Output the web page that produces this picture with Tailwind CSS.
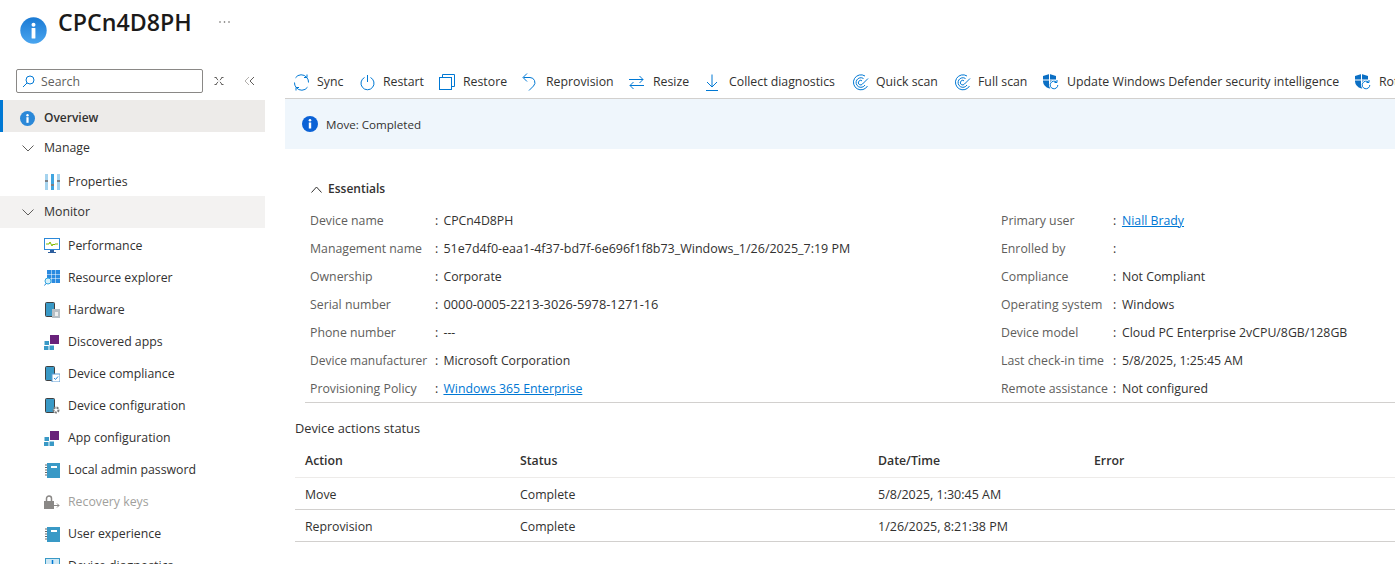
<!DOCTYPE html>
<html lang="en">
<head>
  <meta charset="UTF-8" />
  <title>CPCn4D8PH - Overview</title>
  <script src="https://cdn.jsdelivr.net/npm/@tailwindcss/browser@4"></script>
</head>
<body class="bg-white font-['Open_Sans',sans-serif] text-[12.3px] text-[#323130] h-[564px] w-[1395px] overflow-hidden">

  <!-- Title bar -->
  <header class="h-[60px] flex items-start">
    <svg class="ml-[20px] mt-[17px]" width="27" height="27" viewBox="0 0 27 27"><defs><linearGradient id="ig" x1="0" y1="0" x2="0" y2="1"><stop offset="0" stop-color="#1a7ad4"/><stop offset="1" stop-color="#4aa5ef"/></linearGradient></defs><circle cx="13.5" cy="13.5" r="13.2" fill="url(#ig)"/><circle cx="13.5" cy="7.8" r="2" fill="#fff"/><rect x="11.6" y="11" width="3.8" height="10.5" rx="0.6" fill="#fff"/></svg>
    <h1 class="ml-[11px] mt-[8px] text-[23.2px] leading-[28px] font-semibold text-[#1b1a19]">CPCn4D8PH</h1>
    <svg class="ml-[27px] mt-[21px]" width="11" height="2" viewBox="0 0 11 2" fill="#605e5c"><circle cx="1" cy="1" r=".8"/><circle cx="5.500" cy="1" r=".8"/><circle cx="10" cy="1" r=".8"/></svg>
  </header>

  <div class="flex">
    <!-- Left nav -->
    <aside class="w-[285px] shrink-0 h-[504px] overflow-hidden pr-[20px]">
      <div class="h-[40px] flex items-start pt-[9px]">
        <div class="ml-[16px] w-[187px] h-[24px] border border-[#8a8886] rounded-[2px] flex items-center">
          <svg class="ml-[5px]" width="13" height="13" viewBox="0 0 13 13" fill="none" stroke="#0078d4" stroke-width="1"><circle cx="8" cy="5" r="4"/><path d="M5 8 1 12"/></svg>
          <span class="ml-[6px] pt-[2px] text-[#605e5c]">Search</span>
        </div>
        <svg class="ml-[11px] mt-[7px]" width="10" height="10" viewBox="0 0 10 10" fill="none" stroke="#605e5c" stroke-width="1"><path d="M1.5 1 4 4.200M8.500 1 6 4.200M1.500 9 4 5.800M8.500 9 6 5.800M.5 1.500h2M7.500 1.500h2M.5 8.500h2M7.500 8.500h2"/></svg>
        <svg class="ml-[20px] mt-[7px]" width="11" height="10" viewBox="0 0 11 10" fill="none" stroke-width="1"><path d="M5 1 1 5l4 4" stroke="#b3b0ad"/><path d="M10 1 6 5l4 4" stroke="#605e5c"/></svg>
      </div>

      <nav>
        <a class="h-[32px] pt-[4px] flex items-center bg-[#edebe9] border-l-[3px] border-[#0078d4] font-semibold">
          <svg class="ml-[17px]" width="15" height="15" viewBox="0 0 15 15"><circle cx="7.5" cy="7.5" r="7.5" fill="#2b88d8"/><circle cx="7.5" cy="4.2" r="1.2" fill="#fff"/><rect x="6.4" y="6.2" width="2.2" height="5.6" fill="#fff"/></svg>
          <span class="ml-[9px] text-[12px]">Overview</span>
        </a>
        <a class="h-[32px] flex items-center">
          <svg class="ml-[22px]" width="12" height="7" viewBox="0 0 12 7" fill="none" stroke="#605e5c" stroke-width="1"><path d="M.5.5 6 6 11.5.5"/></svg>
          <span class="ml-[10px]">Manage</span>
        </a>
        <a class="h-[32px] pt-[4px] flex items-center">
          <svg class="ml-[45px]" width="15" height="16" viewBox="0 0 15 16"><path d="M0 0h3v16H0zM12 0h3v16h-3z" fill="#a5d3ee"/><path d="M6 0h3v16H6z" fill="#3fa5e0"/><path d="M0 6h3v2H0zM6 10h3v2H6zM12 6h3v2h-3z" fill="#7a7f85"/></svg>
          <span class="ml-[8px]">Properties</span>
        </a>
        <a class="h-[32px] flex items-center bg-[#f3f2f1]">
          <svg class="ml-[22px]" width="12" height="7" viewBox="0 0 12 7" fill="none" stroke="#605e5c" stroke-width="1"><path d="M.5.5 6 6 11.500.5"/></svg>
          <span class="ml-[10px]">Monitor</span>
        </a>
        <a class="h-[32px] pt-[4px] flex items-center">
          <svg class="ml-[44px]" width="16" height="16" viewBox="0 0 16 16"><rect x=".5" y=".5" width="15" height="11" fill="#fff" stroke="#2b88d8"/><path d="M2 6h3l1-2 2 4 1-2 1 1 1-1h3" fill="none" stroke="#7fba00"/><path d="M6 12h4v2h2v1H4v-1h2z" fill="#2d5f9e"/></svg>
          <span class="ml-[8px]">Performance</span>
        </a>
        <a class="h-[32px] pt-[4px] flex items-center">
          <svg class="ml-[44px]" width="16" height="16" viewBox="0 0 16 16"><path d="M3 0h4v4H3zM7.500 0h4v4h-4zM12 0h4v4h-4zM3 4.500h4v4H3zM7.500 4.500h4v4h-4zM12 4.500h4v4h-4zM7.500 9h4v4h-4zM12 9h4v4h-4z" fill="#2a8ae0"/><circle cx="4" cy="11" r="3" fill="#d5f0fb" stroke="#32a6de"/><path d="M2 13.500.5 15.500" stroke="#1a7fd9"/></svg>
          <span class="ml-[8px]">Resource explorer</span>
        </a>
        <a class="h-[32px] pt-[4px] flex items-center">
          <svg class="ml-[45px]" width="15" height="16" viewBox="0 0 15 16"><rect x=".5" y=".5" width="9" height="14" rx="1" fill="#3999c6" stroke="#404040"/><rect x="7" y="7" width="8" height="9" fill="#b8bfc4"/><rect x="10" y="10" width="3" height="4" fill="#eee"/></svg>
          <span class="ml-[8px]">Hardware</span>
        </a>
        <a class="h-[32px] pt-[4px] flex items-center">
          <svg class="ml-[44px]" width="15" height="15" viewBox="0 0 15 15"><rect x="6" y="0" width="9" height="9" fill="#68217a"/><path d="M.5 6H5v4H.500zM0 11h4.500v4H0zM5.500 10.500H10V15H5.500z" fill="#3999c6"/></svg>
          <span class="ml-[9px]">Discovered apps</span>
        </a>
        <a class="h-[32px] pt-[4px] flex items-center">
          <svg class="ml-[45px]" width="15" height="16" viewBox="0 0 15 16"><rect x=".5" y=".5" width="9" height="14" rx="1" fill="#3999c6" stroke="#404040"/><rect x="7" y="8" width="8" height="8" fill="#fff" stroke="#5a9bd5"/><path d="m9 12 1.500 1.500L13 10.500" fill="none" stroke="#2b88d8"/></svg>
          <span class="ml-[8px]">Device compliance</span>
        </a>
        <a class="h-[32px] pt-[4px] flex items-center">
          <svg class="ml-[45px]" width="15" height="16" viewBox="0 0 15 16"><rect x=".5" y=".5" width="9" height="14" rx="1" fill="#3999c6" stroke="#404040"/><circle cx="11" cy="12" r="2.500" fill="#fff" stroke="#7a7a7a" stroke-width="2" stroke-dasharray="2 1"/></svg>
          <span class="ml-[8px]">Device configuration</span>
        </a>
        <a class="h-[32px] pt-[4px] flex items-center">
          <svg class="ml-[44px]" width="15" height="15" viewBox="0 0 15 15"><rect x="6" y="0" width="9" height="9" fill="#68217a"/><path d="M.5 6H5v4H.500zM0 11h4.500v4H0zM5.500 10.500H10V15H5.500z" fill="#3999c6"/></svg>
          <span class="ml-[9px]">App configuration</span>
        </a>
        <a class="h-[32px] pt-[4px] flex items-center">
          <svg class="ml-[45px]" width="15" height="15" viewBox="0 0 15 15"><rect x="2" y="0" width="13" height="15" fill="#3999c6"/><path d="M0 2h2M0 4.500h2M0 7h2M0 9.500h2M0 12h2" stroke="#404040" stroke-width=".8"/><rect x="6" y="3" width="6" height="2" fill="#fff"/></svg>
          <span class="ml-[8px]">Local admin password</span>
        </a>
        <a class="h-[32px] pt-[4px] flex items-center text-[#a19f9d]">
          <svg class="ml-[44px]" width="16" height="14" viewBox="0 0 16 14"><rect x="0" y="6" width="10" height="8" fill="#8a8886"/><path d="M2.500 6V3.500a2.500 2.500 0 0 1 5 0V6" fill="none" stroke="#8a8886" stroke-width="1.500"/><path d="M10 10.500h5m-2-2 2 2-2 2" fill="none" stroke="#8a8886"/></svg>
          <span class="ml-[8px]">Recovery keys</span>
        </a>
        <a class="h-[32px] pt-[4px] flex items-center">
          <svg class="ml-[45px]" width="15" height="15" viewBox="0 0 15 15"><rect x="2" y="0" width="13" height="15" fill="#3999c6"/><path d="M0 2h2M0 4.500h2M0 7h2M0 9.500h2M0 12h2" stroke="#404040" stroke-width=".8"/><rect x="6" y="3" width="6" height="2" fill="#fff"/></svg>
          <span class="ml-[8px]">User experience</span>
        </a>
        <a class="h-[32px] pt-[4px] flex items-center">
          <svg class="ml-[45px]" width="15" height="16" viewBox="0 0 15 16"><rect x=".5" y=".5" width="14" height="13" fill="#cfe8f5" stroke="#3999c6"/><path d="M7.500 2v8M4.500 7l3 3 3-3" fill="none" stroke="#0078d4" stroke-width="1.500"/></svg>
          <span class="ml-[8px]">Device diagnostics</span>
        </a>
      </nav>
    </aside>

    <!-- Main -->
    <main class="flex-1 min-w-0">
      <!-- Command bar -->
      <div class="h-[39px] border-b border-[#d2d0ce] flex items-start pt-[11px] pl-[8px] whitespace-nowrap overflow-hidden">
        <button class="w-[66px] shrink-0 flex items-center h-[22px]">
          <span class="w-[24px] shrink-0"><svg width="17" height="17" viewBox="0 0 17 17" fill="none" stroke="#0078d4" stroke-width="1"><path d="M13.800 3.500A7 7 0 0 0 2.500 3.800M3.200 13.500A7 7 0 0 0 14.500 13.200M1.500 8.500a7 7 0 0 0 1.700 5M15.500 8.500a7 7 0 0 0-1.700-5M11 3.500h3V.5M6 13.500H3v3"/></svg></span>
          <span>Sync</span>
        </button>
        <button class="w-[80px] shrink-0 flex items-center h-[22px]">
          <span class="w-[24px] shrink-0 pl-[1px]"><svg width="15" height="17" viewBox="0 0 15 17" fill="none" stroke="#0078d4" stroke-width="1"><path d="M7.500 1v7M4.500 3.500a6.500 6.500 0 1 0 6 0"/></svg></span>
          <span>Restart</span>
        </button>
        <button class="w-[83px] shrink-0 flex items-center h-[22px]">
          <span class="w-[24px] shrink-0"><svg width="16" height="16" viewBox="0 0 16 16" fill="none" stroke="#0078d4" stroke-width="1"><path d="M3.500 3V.5h12v12H13"/><rect x=".5" y="3.500" width="12" height="12"/></svg></span>
          <span>Restore</span>
        </button>
        <button class="w-[107px] shrink-0 flex items-center h-[22px]">
          <span class="w-[24px] shrink-0"><svg width="15" height="18" viewBox="0 0 15 18" fill="none" stroke="#0078d4" stroke-width="1"><path d="M5 .5 1 4.500l4 4M1.500 4.500h6.500a5 5 0 0 1 3.500 8.500L7 17.500"/></svg></span>
          <span>Reprovision</span>
        </button>
        <button class="w-[76px] shrink-0 flex items-center h-[22px]">
          <span class="w-[24px] shrink-0"><svg width="15" height="15" viewBox="0 0 15 15" fill="none" stroke="#0078d4" stroke-width="1"><path d="M0 4.500h14M10.500 1 14 4.500 10.500 8M15 10.500H1M4.500 7 1 10.500 4.500 14"/></svg></span>
          <span>Resize</span>
        </button>
        <button class="w-[147px] shrink-0 flex items-center h-[22px]">
          <span class="w-[24px] shrink-0"><svg width="14" height="17" viewBox="0 0 14 17" fill="none" stroke="#0078d4" stroke-width="1"><path d="M7 .5v12M2 8l5 5 5-5M1 16.500h12"/></svg></span>
          <span>Collect diagnostics</span>
        </button>
        <button class="w-[102px] shrink-0 flex items-center h-[22px]">
          <span class="w-[24px] shrink-0"><svg width="17" height="17" viewBox="0 0 17 17" fill="none" stroke="#0078d4" stroke-width="1"><path d="M13 2A7.500 7.500 0 1 0 15.500 12M11.500 4.500A4.800 4.800 0 1 0 13 11M10 6.800A2.300 2.300 0 1 0 10.500 10L16 4.500"/></svg></span>
          <span>Quick scan</span>
        </button>
        <button class="w-[89px] shrink-0 flex items-center h-[22px]">
          <span class="w-[24px] shrink-0"><svg width="17" height="17" viewBox="0 0 17 17" fill="none" stroke="#0078d4" stroke-width="1"><path d="M13 2A7.500 7.500 0 1 0 15.500 12M11.500 4.500A4.800 4.800 0 1 0 13 11M10 6.800A2.300 2.300 0 1 0 10.500 10L16 4.500"/></svg></span>
          <span>Full scan</span>
        </button>
        <button class="w-[312px] shrink-0 flex items-center h-[22px]">
          <span class="w-[24px] shrink-0"><svg width="16" height="16" viewBox="0 0 16 16"><path d="M6.500 0 13 2v4a8 8 0 0 1-6.500 8.500A8 8 0 0 1 0 6V2z" fill="#0b6fc4"/><path d="M6.500 0v12M0 6h13" stroke="#fff"/><circle cx="11" cy="11" r="5" fill="#fff"/><path d="M14.800 11a3.800 3.800 0 1 1-1.200-2.800M14 6v2.500h-2.500" fill="none" stroke="#0078d4"/></svg></span>
          <span class="text-[12.35px]">Update Windows Defender security intelligence</span>
        </button>
        <button class="shrink-0 flex items-center h-[22px]">
          <span class="w-[24px] shrink-0"><svg width="16" height="16" viewBox="0 0 16 16"><path d="M6.500 0 13 2v4a8 8 0 0 1-6.500 8.500A8 8 0 0 1 0 6V2z" fill="#0b6fc4"/><path d="M6.500 0v12M0 6h13" stroke="#fff"/><circle cx="11" cy="11" r="5" fill="#fff"/><path d="M14.800 11a3.800 3.800 0 1 1-1.200-2.800M14 6v2.500h-2.500" fill="none" stroke="#0078d4"/></svg></span>
          <span>Rotate local admin password</span>
        </button>
      </div>

      <!-- Banner -->
      <div class="h-[50px] bg-[#eff6fc] flex items-center pl-[17px]">
        <svg width="16" height="16" viewBox="0 0 16 16"><circle cx="8" cy="8" r="8" fill="#0b62d6"/><circle cx="8" cy="4.300" r="1.300" fill="#fff"/><rect x="6.800" y="6.500" width="2.400" height="6" fill="#fff"/></svg>
        <span class="ml-[8px] pt-[1px] text-[11.6px]">Move: Completed</span>
      </div>

      <!-- Essentials -->
      <section class="pl-[10px]">
        <div class="h-[24px] mt-[28px] flex items-center pl-[16px] font-semibold">
          <svg width="11" height="7" viewBox="0 0 11 7" fill="none" stroke="#323130" stroke-width="1"><path d="M.5 6.500 5.500 1l5 5.500"/></svg>
          <span class="ml-[6px] text-[12px]">Essentials</span>
        </div>
        <div class="flex mt-[5px] ml-[10px] border-b border-[#d2d0ce] h-[197px] pt-[1px] pl-[5px]">
          <dl class="w-[691px] shrink-0 grid grid-cols-[125px_1fr] auto-rows-[28px] items-center">
            <dt class="text-[#605e5c]">Device name</dt><dd><span class="mr-[2px]">:</span> CPCn4D8PH</dd>
            <dt class="text-[#605e5c]">Management name</dt><dd><span class="mr-[2px]">:</span> <span class="text-[12.5px]">51e7d4f0-eaa1-4f37-bd7f-6e696f1f8b73_Windows_1/26/2025_7:19 PM</span></dd>
            <dt class="text-[#605e5c]">Ownership</dt><dd><span class="mr-[2px]">:</span> Corporate</dd>
            <dt class="text-[#605e5c]">Serial number</dt><dd><span class="mr-[2px]">:</span> <span class="text-[12.8px]">0000-0005-2213-3026-5978-1271-16</span></dd>
            <dt class="text-[#605e5c]">Phone number</dt><dd><span class="mr-[2px]">:</span> ---</dd>
            <dt class="text-[#605e5c] text-[12px]">Device manufacturer</dt><dd><span class="mr-[2px]">:</span> Microsoft Corporation</dd>
            <dt class="text-[#605e5c]">Provisioning Policy</dt><dd><span class="mr-[2px]">:</span> <a class="text-[#0078d4] underline">Windows 365 Enterprise</a></dd>
          </dl>
          <dl class="flex-1 grid grid-cols-[112px_1fr] auto-rows-[28px] items-center">
            <dt class="text-[#605e5c]">Primary user</dt><dd><span class="mr-[2.5px]">:</span> <a class="text-[#0078d4] underline">Niall Brady</a></dd>
            <dt class="text-[#605e5c]">Enrolled by</dt><dd>:</dd>
            <dt class="text-[#605e5c]">Compliance</dt><dd><span class="mr-[2.5px]">:</span> Not Compliant</dd>
            <dt class="text-[#605e5c]">Operating system</dt><dd><span class="mr-[2.5px]">:</span> Windows</dd>
            <dt class="text-[#605e5c]">Device model</dt><dd><span class="mr-[2.5px]">:</span> Cloud PC Enterprise 2vCPU/8GB/128GB</dd>
            <dt class="text-[#605e5c]">Last check-in time</dt><dd><span class="mr-[2.5px]">:</span> 5/8/2025, 1:25:45 AM</dd>
            <dt class="text-[#605e5c]">Remote assistance</dt><dd><span class="mr-[2.5px]">:</span> Not configured</dd>
          </dl>
        </div>

        <h2 class="mt-[15px] text-[12.8px] leading-[20px]">Device actions status</h2>
        <table class="mt-[3px] w-full table-fixed border-collapse">
          <thead>
            <tr class="h-[36px] border-b border-[#edebe9] font-semibold text-left">
              <th class="pl-[10px] pt-[4px] w-[225px] font-semibold">Action</th>
              <th class="pt-[4px] w-[358px] font-semibold">Status</th>
              <th class="pt-[4px] w-[216px] font-semibold">Date/Time</th>
              <th class="pt-[4px] font-semibold">Error</th>
            </tr>
          </thead>
          <tbody>
            <tr class="h-[32px] border-b border-[#d2d0ce]"><td class="pl-[10px] pt-[4px]">Move</td><td class="pt-[4px]">Complete</td><td class="pt-[4px] text-[12.5px]">5/8/2025, 1:30:45 AM</td><td></td></tr>
            <tr class="h-[32px] border-b border-[#d2d0ce]"><td class="pl-[10px] pt-[4px]">Reprovision</td><td class="pt-[4px]">Complete</td><td class="pt-[4px] text-[12.5px]">1/26/2025, 8:21:38 PM</td><td></td></tr>
          </tbody>
        </table>
      </section>
    </main>
  </div>
</body>
</html>
